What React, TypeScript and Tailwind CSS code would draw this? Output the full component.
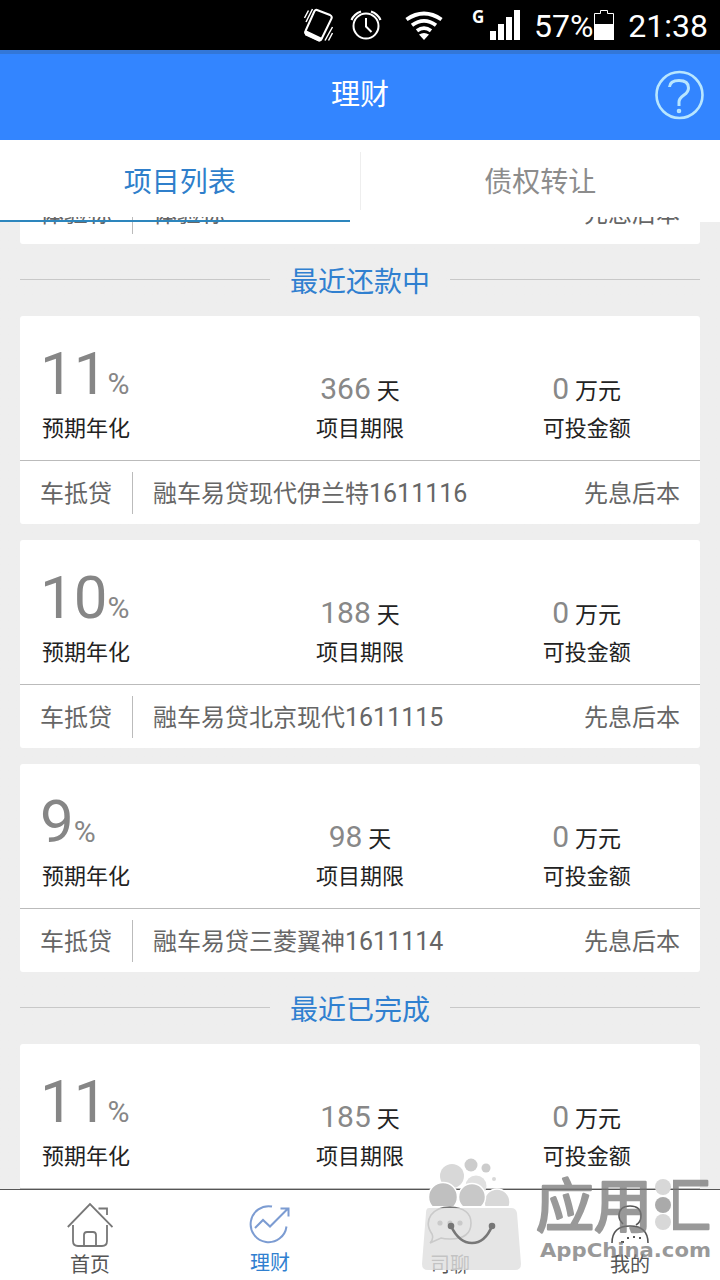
type Project = {
  rate: string;
  days: string;
  amount: string;
  type?: string;
  name?: string;
  code?: string;
  repay?: string;
};

const repaying: Project[] = [
  { rate: "11", days: "366", amount: "0", type: "车抵贷", name: "融车易贷现代伊兰特", code: "1611116", repay: "先息后本" },
  { rate: "10", days: "188", amount: "0", type: "车抵贷", name: "融车易贷北京现代", code: "1611115", repay: "先息后本" },
  { rate: "9", days: "98", amount: "0", type: "车抵贷", name: "融车易贷三菱翼神", code: "1611114", repay: "先息后本" },
];

const finished: Project = { rate: "11", days: "185", amount: "0" };

function StatusBar() {
  return (
    <div className="flex h-[50px] shrink-0 items-start justify-end bg-black pr-3 text-white">
      <svg className="mt-[7px] h-9 w-8" viewBox="0 0 32 36" fill="none" stroke="white" strokeWidth="2">
        <path d="M14 3 27 8Q29.500 9.500 28.500 11.500L18.500 32Q17.500 34 15.500 33L3 27Q1.500 26 2.500 24L11.500 4Q12.500 2.500 14 3Z" />
        <path d="M3 24.500 18 31.500 16 33.500 3 27.500Z" fill="white" />
        <path d="M9.500 2 3 15M5.500 3.500 1.500 11M29.500 20 22 33.500M29.500 26 25.500 33.500" strokeWidth="1.500" />
      </svg>
      <svg className="mt-2 ml-[15px] h-8 w-8" viewBox="0 0 32 32" fill="none" stroke="white" strokeWidth="2">
        <circle cx="16" cy="18" r="12.500" />
        <path d="M16 10v8.500l5.500 5.500" />
        <path d="M1.500 12Q4 6 11 3.500M30.500 12Q28 6 21 3.500" strokeWidth="2.200" />
      </svg>
      <svg className="mt-[11px] ml-[22px] h-[30px] w-10" viewBox="0 0 40 30" fill="none" stroke="white" strokeWidth="3.800">
        <path d="M2.500 8.500Q20 -3.500 37.500 8.500" />
        <path d="M8 14.300Q20 5.500 32 14.300" />
        <path d="M13 19.800Q20 14.500 27 19.800" />
        <path d="M15 23.500Q20 20.500 25 23.500L20 29Z" fill="white" stroke="none" />
      </svg>
      <span className="mt-[7px] ml-[28px] w-[13px] font-['Noto_Sans',sans-serif] text-[17px] leading-5 font-bold">G</span>
      <svg className="mt-[10px] ml-[5px] h-[30px] w-[30px]" viewBox="0 0 30 30" fill="white">
        <path d="M0 21h6v9H0zM8 14h6v16H8zM16 7h6v23h-6zM24 0h6v30h-6z" />
      </svg>
      <span className="ml-[14px] w-[60px] text-[32px] leading-[52px]">57%</span>
      <svg className="mt-[10px] h-[30px] w-5" viewBox="0 0 20 30">
        <path d="M.5 29.500V3.500H6.500V.5H13.500V3.500H19.500V29.500Z" fill="none" stroke="white" />
        <path d="M0 14h20v16H0z" fill="white" />
      </svg>
      <span className="ml-[14px] w-20 text-right text-[32px] leading-[52px]">21:38</span>
    </div>
  );
}

function Header() {
  return (
    <header className="relative flex h-[90px] shrink-0 items-center justify-center border-t-4 border-[#3377d8] bg-[#3385ff] pb-0.5">
      <h1 className="text-[29px] text-white">理财</h1>
      <svg className="absolute top-[16px] right-4 h-[50px] w-[49px]" viewBox="0 0 49 50" fill="none" stroke="#b8e6ff" strokeWidth="2.600">
        <circle cx="24.500" cy="25" r="23" />
        <path d="M14.500 17Q15 10.500 24 10.500Q33.500 10.500 33.500 18Q33.500 22 29 25Q24 28.500 24 32V36" strokeWidth="3" />
        <circle cx="24" cy="41" r="1" />
      </svg>
    </header>
  );
}

function Tabs() {
  return (
    <div className="relative z-10 flex h-[77px] shrink-0 bg-white text-[28px]">
      <div className="flex h-[82px] flex-1 items-center justify-center pt-1 text-[#2f7fcb]">项目列表</div>
      <div className="mt-3 h-[58px] w-px bg-[#eeeeee]" />
      <div className="flex h-[82px] flex-1 items-center justify-center pt-1 text-[#8c8c8c]">债权转让</div>
      <div className="absolute top-[80px] left-0 h-0.5 w-[350px] bg-[#2d86bd]" />
    </div>
  );
}

function Section({ title }: { title: string }) {
  return (
    <div className="flex h-[72px] shrink-0 items-center gap-5 px-5">
      <div className="mb-0.5 h-px flex-1 bg-[#c8c8c8]" />
      <h2 className="mt-1.5 text-[28px] leading-none text-[#3080d0]">{title}</h2>
      <div className="mb-0.5 h-px flex-1 bg-[#c8c8c8]" />
    </div>
  );
}

function Stat({ value, unit, label }: { value: string; unit: string; label: string }) {
  return (
    <div className="flex flex-col items-center pt-[53px] text-[#222222]">
      <p className="flex h-10 items-baseline gap-[6px] text-[23px] leading-10">
        <span className="text-[30px] text-[#888888]">{value}</span>
        {unit}
      </p>
      <p className="mt-1 text-[22px] leading-8">{label}</p>
    </div>
  );
}

function CardStats({ project }: { project: Project }) {
  return (
    <div className="grid h-[145px] grid-cols-3 border-b border-[#bbbbbb]">
      <div className="pt-6 pl-5 text-[#868686]">
        <p className="flex h-[68px] items-baseline text-[60px] leading-[68px]">
          {project.rate}
          <span className="text-[30px]">%</span>
        </p>
        <p className="mt-[5px] pl-0.5 text-[22px] leading-8 text-[#222222]">预期年化</p>
      </div>
      <Stat value={project.days} unit="天" label="项目期限" />
      <Stat value={project.amount} unit="万元" label="可投金额" />
    </div>
  );
}

function CardFooter({ type, name, code, repay }: Partial<Project>) {
  return (
    <div className="flex h-[63px] shrink-0 items-center px-5 text-[24px] text-[#666666]">
      <span className="mt-0.5 w-[92px]">{type}</span>
      <span className="mr-5 h-[42px] w-px bg-[#bbbbbb]" />
      <span className="mt-0.5 flex-1">
        {name}
        {code && <span className="text-[25px]">{code}</span>}
      </span>
      <span className="mt-0.5">{repay}</span>
    </div>
  );
}

function ProjectCard({ project }: { project: Project }) {
  return (
    <div className="mx-5 shrink-0 rounded-[3px] bg-white">
      <CardStats project={project} />
      {project.name && <CardFooter {...project} />}
    </div>
  );
}

function NavBar() {
  return (
    <nav className="grid h-[91px] shrink-0 grid-cols-4 border-t border-[#555555] bg-white text-[20px] leading-6 text-[#555555]">
      <div className="flex flex-col items-center pt-3">
        <svg className="h-[46px] w-[46px]" viewBox="0 0 46 46" fill="none" stroke="#777777" strokeWidth="1.800">
          <path d="M.8 25 23 2 45.500 25M31.500 6.500H40V13" />
          <path d="M6 23V39Q6 44 11 44H35Q40 44 40 39V23" />
          <path d="M17 44V33Q17 30 20 30H26Q29 30 29 33V44" />
        </svg>
        <span className="mt-[5px]">首页</span>
      </div>
      <div className="flex flex-col items-center pt-3 text-[#3080d0]">
        <svg className="h-[46px] w-[46px]" viewBox="0 0 46 46" fill="none" stroke="#7c9cd2" strokeWidth="2">
          <path d="M25 4.500A18 18 0 1 0 39.500 24.500" />
          <path d="M8 26 16 18 23 24.500 41 6.500M33.500 6.500H41.500V14.500" />
        </svg>
        <span className="mt-[3px]">理财</span>
      </div>
      <div className="flex flex-col items-center pt-3">
        <svg className="h-[46px] w-[46px]" viewBox="0 0 46 46" fill="none" stroke="#777777" strokeWidth="1.600">
          <path d="M5 32Q-2 22 4 13Q10 5 23 5Q44 6 44 21Q44 37 23 37Q17 37 14 36L3 41Q7 37 5 32Z" />
          <circle cx="13" cy="21" r="1.800" fill="#777777" />
          <circle cx="23" cy="21" r="1.800" fill="#777777" />
          <circle cx="33" cy="21" r="1.800" fill="#777777" />
        </svg>
        <span className="mt-[5px]">司聊</span>
      </div>
      <div className="flex flex-col items-center pt-3">
        <svg className="h-[46px] w-[46px]" viewBox="0 0 46 46" fill="none" stroke="#555555" strokeWidth="1.600">
          <path d="M16 22Q12 18 12 14Q12 4 23 4Q34 4 34 14Q34 20 29 23" />
          <path d="M5 41Q5 24 23 24Q41 24 41 41" />
          <path d="M14 40h3M20 36h2M26 35h2M32 36h2" strokeWidth="2" />
        </svg>
        <span className="mt-[5px]">我的</span>
      </div>
    </nav>
  );
}

// store badge floating over the bottom right corner
function StoreBadge() {
  return (
    <svg className="pointer-events-none absolute right-0 bottom-0 z-20 h-[140px] w-[320px]" viewBox="0 0 320 140">
      <defs>
        <clipPath id="right-part">
          <path d="M273 34h40v64h-40z" />
        </clipPath>
        <clipPath id="bag-top">
          <path d="M20 10h100v56H20z" />
        </clipPath>
      </defs>
      <g clipPath="url(#bag-top)" fill="#d8d8d8">
        <circle cx="71" cy="25" r="6.500" fill="#cccccc" />
        <circle cx="86" cy="28" r="4.500" fill="#cccccc" />
        <circle cx="94" cy="39" r="2" />
        <circle cx="52" cy="36" r="12" />
        <circle cx="76" cy="46" r="10.500" fill="#e0e0e0" />
        <g stroke="white" strokeWidth="1.500">
          <circle cx="97" cy="62" r="13" />
          <circle cx="72" cy="57" r="13.500" fill="#c8c8c8" />
          <circle cx="43" cy="57" r="14.500" fill="#c0c0c0" />
        </g>
      </g>
      <path d="M29 68H111Q116 68 117 73L121 124Q121 130 115 130H28Q22 130 22 124L26 73Q26 68 29 68Z" fill="#dedede" fillOpacity=".8" />
      <g fill="none" stroke="#777777" strokeWidth="2.600">
        <path d="M51 86Q59 103 72 103Q85 103 92 86" />
        <circle cx="51" cy="86" r="2" fill="#777777" />
        <circle cx="92" cy="86" r="2" fill="#777777" />
      </g>
      <g opacity=".75" fill="#777777" stroke="#777777" strokeLinejoin="round">
        <text x="136" y="87" fontSize="58" strokeWidth="2.500" className="font-['Noto_Sans_CJK_SC',sans-serif]">
          应用
        </text>
        <text x="253" y="87" fontSize="58" strokeWidth="2.500" clipPath="url(#right-part)" className="font-['Noto_Sans_CJK_SC',sans-serif]">
          汇
        </text>
        <text x="140" y="117" fontSize="20" fontWeight="700" textLength="171" lengthAdjust="spacingAndGlyphs" stroke="none" className="font-['DejaVu_Sans',sans-serif]">
          AppChina.com
        </text>
      </g>
      <g fill="#d8d8d8">
        <circle cx="263" cy="47" r="8" />
        <circle cx="263" cy="65" r="8" fill="#aaaaaa" />
        <circle cx="263" cy="82" r="8" />
      </g>
    </svg>
  );
}

export default function App() {
  return (
    <div className="relative flex h-[1280px] w-[720px] flex-col overflow-hidden bg-white font-['Roboto','Noto_Sans_CJK_SC',sans-serif]">
      <StatusBar />
      <Header />
      <Tabs />
      <main className="flex flex-1 flex-col overflow-hidden bg-linear-to-b from-white from-[5px] to-[#eeeeee] to-[5px]">
        {/* tail of the card scrolled under the tabs */}
        <div className="mx-5 flex h-[27px] shrink-0 flex-col justify-end overflow-hidden rounded-b-[3px] bg-white">
          <CardFooter type="体验标" name="体验标" repay="先息后本" />
        </div>
        <Section title="最近还款中" />
        <div className="flex shrink-0 flex-col gap-4">
          {repaying.map((p) => (
            <ProjectCard key={p.code} project={p} />
          ))}
        </div>
        <Section title="最近已完成" />
        <ProjectCard project={finished} />
      </main>
      <NavBar />
      <StoreBadge />
    </div>
  );
}
